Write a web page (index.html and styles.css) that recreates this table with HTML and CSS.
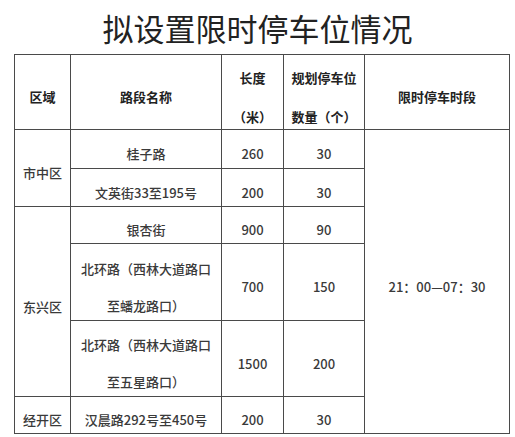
FILE: index.html
```html
<!DOCTYPE html>
<html lang="zh">
<head>
<meta charset="utf-8">
<title>拟设置限时停车位情况</title>
<link rel="stylesheet" href="styles.css">
</head>
<body>
<h1 class="title">拟设置限时停车位情况</h1>
<table class="grid">
  <colgroup>
    <col class="c1"><col class="c2"><col class="c3"><col class="c4"><col class="c5">
  </colgroup>
  <tr class="h-head">
    <th>区域</th>
    <th>路段名称</th>
    <th><span class="ln">长度</span><span class="ln l2h">（米）</span></th>
    <th><span class="ln">规划停车位</span><span class="ln l2h">数量（个）</span></th>
    <th>限时停车时段</th>
  </tr>
  <tr class="h1">
    <td rowspan="2">市中区</td>
    <td>桂子路</td>
    <td>260</td>
    <td>30</td>
    <td rowspan="6">21：00—07：30</td>
  </tr>
  <tr class="h2">
    <td>文英街33至195号</td>
    <td>200</td>
    <td>30</td>
  </tr>
  <tr class="h3">
    <td rowspan="3">东兴区</td>
    <td>银杏街</td>
    <td>900</td>
    <td>90</td>
  </tr>
  <tr class="h4">
    <td><span class="ln">北环路（西林大道路口</span><span class="ln l2">至蟠龙路口）</span></td>
    <td>700</td>
    <td>150</td>
  </tr>
  <tr class="h5">
    <td><span class="ln">北环路（西林大道路口</span><span class="ln l2">至五星路口）</span></td>
    <td>1500</td>
    <td>200</td>
  </tr>
  <tr class="h6">
    <td>经开区</td>
    <td>汉晨路292号至450号</td>
    <td>200</td>
    <td>30</td>
  </tr>
</table>
</body>
</html>
```
FILE: styles.css
```css
html, body {
  margin: 0;
  padding: 0;
  background: #fff;
}
body {
  font-family: "Noto Sans CJK SC", "Noto Sans", sans-serif;
  color: #333;
}
.title {
  margin: 0;
  height: 54px;
  line-height: 56px;
  font-size: 31px;
  font-weight: 400;
  color: #222;
  text-align: center;
}
.grid {
  margin-left: 14px;
  width: 495px;
  border-collapse: collapse;
  table-layout: fixed;
}
.c1 { width: 56px; }
.c2 { width: 151px; }
.c3 { width: 62px; }
.c4 { width: 81px; }
.c5 { width: 145px; }
.grid th, .grid td {
  border: 1px solid #4a4a4a;
  padding: 10px 0 0 0;
  text-align: center;
  vertical-align: middle;
  font-size: 13px;
  line-height: 20px;
  white-space: nowrap;
}
.grid th {
  font-weight: 700;
  color: #222;
}
.grid td {
  font-weight: 500;
  color: #3a3a3a;
}
.ln { display: block; }
.l2 { margin-top: 17px; }
.l2h { margin-top: 19px; }
.h-head { height: 75px; }
.h1 { height: 39px; }
.h2 { height: 38px; }
.h3 { height: 37px; }
.h4 { height: 77px; }
.h5 { height: 76px; }
.h6 { height: 37px; }
```
